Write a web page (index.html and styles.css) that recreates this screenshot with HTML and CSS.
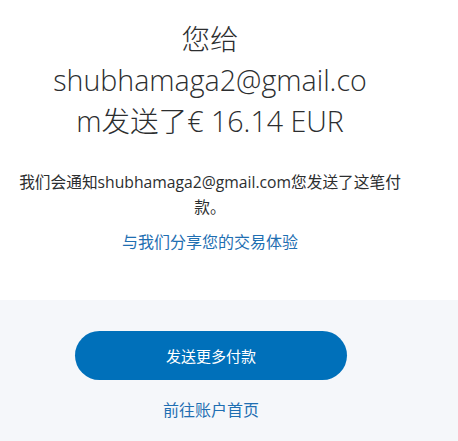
FILE: index.html
```html
<!DOCTYPE html>
<html lang="zh-CN">
<head>
<meta charset="utf-8">
<title>付款已发送</title>
<link rel="stylesheet" href="styles.css">
</head>
<body>
<main class="main">
  <h1 class="title">您给<br>shubhamaga2@gmail.co<br>m发送了€ 16.14 EUR</h1>
  <p class="note">我们会通知shubhamaga2@gmail.com您发送了这笔付款。</p>
  <a class="share" href="#">与我们分享您的交易体验</a>
</main>
<footer class="actions">
  <div class="actions-inner">
    <a class="btn" href="#">发送更多付款</a>
    <a class="home" href="#">前往账户首页</a>
  </div>
</footer>
</body>
</html>
```

FILE: styles.css
```css
html, body {
  margin: 0;
  padding: 0;
  background: #ffffff;
}
body {
  font-family: "Open Sans", "Noto Sans CJK SC", sans-serif;
  color: #2c2e2f;
  height: 441px;
  display: flex;
  flex-direction: column;
}
.main {
  width: 420px;
  height: 300px;
  box-sizing: border-box;
  padding-top: 18px;
  display: flex;
  flex-direction: column;
  align-items: center;
  text-align: center;
}
.title {
  margin: 0;
  font-size: 28.6px;
  line-height: 41px;
  font-weight: 300;
  color: #2c2e2f;
}
.note {
  margin: 29px 0 0;
  width: 396px;
  font-size: 15.7px;
  line-height: 25px;
  color: #2c2e2f;
}
.share {
  margin-top: 10px;
  font-size: 16px;
  line-height: 24px;
  color: #1f6fb2;
  text-decoration: none;
}
.actions {
  flex: 1;
  background: #f5f7fa;
}
.actions-inner {
  width: 422px;
  padding-top: 31px;
  display: flex;
  flex-direction: column;
  align-items: center;
}
.btn {
  width: 272px;
  height: 49px;
  border-radius: 25px;
  background: #0070ba;
  color: #ffffff;
  font-size: 15px;
  display: flex;
  align-items: center;
  justify-content: center;
  text-decoration: none;
}
.home {
  margin-top: 18px;
  font-size: 16px;
  line-height: 24px;
  color: #1f6fb2;
  text-decoration: none;
}
```
